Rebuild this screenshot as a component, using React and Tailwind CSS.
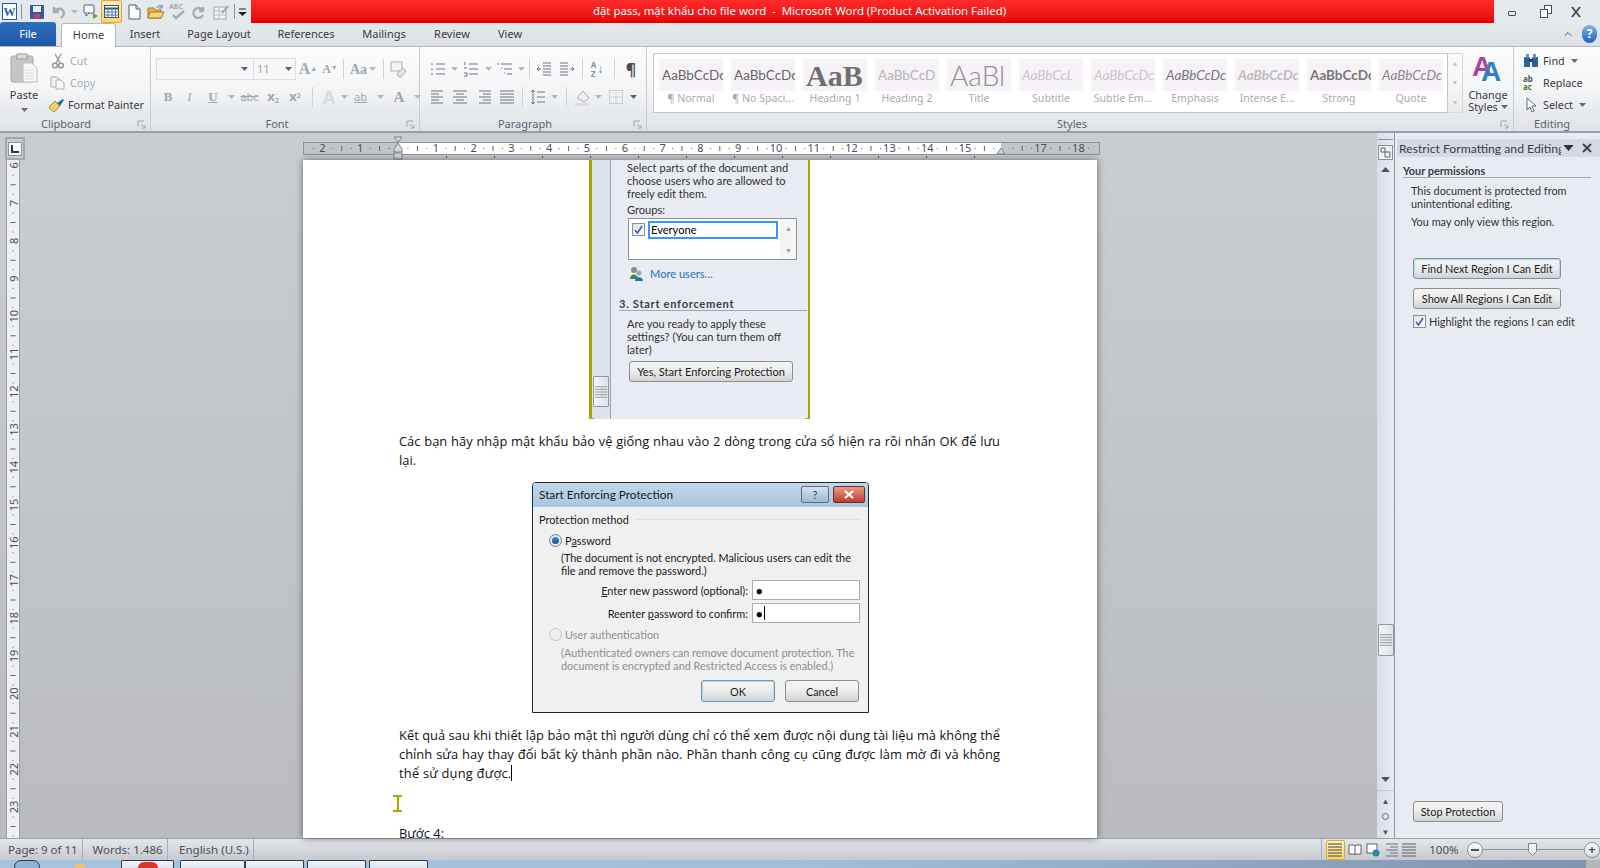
import { ChevronUp } from 'lucide-react';

const BTN = 'flex items-center justify-center whitespace-nowrap border border-[#8a8f96] rounded-[3px] bg-gradient-to-b from-[#f4f4f4] via-[#ececec] to-[#d2d2d2] text-[#1c1c1c]';

const styleItems = [
  { name: '¶ Normal', text: 'AaBbCcDc', cls: "text-[13.5px] text-[#666]" },
  { name: '¶ No Spaci...', text: 'AaBbCcDc', cls: "text-[13.5px] text-[#666]" },
  { name: 'Heading 1', text: 'AaB', cls: "text-[30px] font-bold text-[#6f6f6f] font-['Liberation_Serif',serif]" },
  { name: 'Heading 2', text: 'AaBbCcD', cls: "text-[13.5px] text-[#b5b5b5]" },
  { name: 'Title', text: 'AaBl', cls: "text-[28px] font-light text-[#8f8f8f]" },
  { name: 'Subtitle', text: 'AaBbCcL', cls: "text-[13.5px] italic text-[#c6c6c6]" },
  { name: 'Subtle Em...', text: 'AaBbCcDc', cls: "text-[13.5px] italic text-[#c6c6c6]" },
  { name: 'Emphasis', text: 'AaBbCcDc', cls: "text-[13.5px] italic text-[#777]" },
  { name: 'Intense E...', text: 'AaBbCcDc', cls: "text-[13.5px] italic font-bold text-[#bcbcbc]" },
  { name: 'Strong', text: 'AaBbCcDc', cls: "text-[13.5px] font-bold text-[#777]" },
  { name: 'Quote', text: 'AaBbCcDc', cls: "text-[13.5px] italic text-[#888]" },
];

const tabs = [
  { name: 'Insert', w: 'w-[58px]' },
  { name: 'Page Layout', w: 'w-[90px]' },
  { name: 'References', w: 'w-[84px]' },
  { name: 'Mailings', w: 'w-[72px]' },
  { name: 'Review', w: 'w-[64px]' },
  { name: 'View', w: 'w-[52px]' },
];

function Caret({ color = '#b4b8bd', className = '' }) {
  return (
    <svg width="7" height="4" viewBox="0 0 7 4" className={className}>
      <path d="M0 0h7L3.5 4z" fill={color} />
    </svg>
  );
}

function Lines({ kind = 'left', color = '#6f737a' }) {
  const rows = {
    left: 'M1 2h12M1 5h8M1 8h12M1 11h8M1 14h12',
    center: 'M1 2h14M4 5h8M1 8h14M4 11h8M1 14h14',
    right: 'M3 2h12M7 5h8M3 8h12M7 11h8M3 14h12',
    full: 'M1 2h14M1 5h14M1 8h14M1 11h14M1 14h14',
    bullets: 'M6 3h9M6 8h9M6 13h9M1 3h2M1 8h2M1 13h2',
    numbers: 'M6 3h9M6 8h9M6 13h9M2 1v3M1 7h3M1 12h3v3H1',
    multi: 'M4 3h11M7 8h8M10 13h5M1 2v2M4 7h1M7 12h1',
    dec: 'M7 2h8M7 5h8M7 8h8M7 11h8M7 14h8M5 8H1M3 6L1 8l2 2',
    inc: 'M1 2h8M1 5h8M1 8h8M1 11h8M1 14h8M11 8h4M13 6l2 2-2 2',
    spacing: 'M7 3h8M7 8h8M7 13h8M3 1v14M1 3l2-2 2 2M1 13l2 2 2-2',
  };
  return (
    <svg width="16" height="16" viewBox="0 0 16 16">
      <path d={rows[kind]} fill="none" stroke={color} strokeWidth="1" />
    </svg>
  );
}

function Launcher() {
  return (
    <svg width="9" height="9" viewBox="0 0 9 9">
      <path d="M1 7V1h6M4 4l4 4M8 5v3H5" fill="none" stroke="#a2a7ae" strokeWidth="1" />
    </svg>
  );
}

function Sep({ className = 'h-[20px]' }) {
  return <div className={`w-px bg-[#cfd3d8] ${className}`} />;
}

// fixed-width cell so the icons land where they do in the ribbon
function Cell({ w, children }) {
  return <div className={`flex items-center justify-center shrink-0 h-[22px] ${w}`}>{children}</div>;
}

function GroupLabel({ children, pad = 'pr-[16px]', launcher = true }) {
  return (
    <div className={`relative h-[14px] shrink-0 flex items-center justify-center pt-[1px] text-[11px] text-[#5b6470] ${pad}`}>
      {children}
      {launcher && <span className="absolute right-[4px] top-[3px] flex"><Launcher /></span>}
    </div>
  );
}

function TitleBar() {
  return (
    <div className="h-[23px] flex shrink-0 bg-[#e6e9ec]">
      <div className="w-[251px] flex items-center pl-[2px]">
        <div className="w-[15px] h-[17px] bg-white border border-[#1f5fa8] flex items-center justify-center text-[12px] leading-none font-bold text-[#1f5fa8] font-['Liberation_Serif',serif]">W</div>
        <div className="w-px h-[15px] bg-[#8a8f96] ml-[4px]" />
        <svg width="16" height="16" viewBox="0 0 16 16" className="ml-[7px]">
          <rect x="1" y="1" width="14" height="14" rx="1" fill="#3d55a0" />
          <rect x="4" y="2" width="8" height="6" fill="#e8edf5" />
          <rect x="5" y="10" width="6" height="5" fill="#b9426b" />
        </svg>
        <svg width="16" height="16" viewBox="0 0 16 16" className="ml-[6px]">
          <path d="M3 3v5h5M3 8c2-4 9-5 10 1 0 3-2 4-3 5" fill="none" stroke="#a8adb3" strokeWidth="2.4" />
        </svg>
        <Caret className="ml-[4px]" />
        <svg width="16" height="16" viewBox="0 0 16 16" className="ml-[5px]">
          <rect x="1" y="1" width="10" height="8" rx="1" fill="#fff" stroke="#4c5a70" />
          <path d="M3 9v3l3-3" fill="#fff" stroke="#4c5a70" />
          <path d="M10 9l5 3-5 3z" fill="#59a83a" />
        </svg>
        <div className="w-[21px] h-[23px] ml-[2px] rounded-[2px] border border-[#d9a93e] bg-gradient-to-b from-[#fff0b8] to-[#fdd568] flex items-center justify-center">
          <svg width="15" height="13" viewBox="0 0 15 13">
            <rect x="0.5" y="0.5" width="14" height="12" fill="#fff" stroke="#33507f" />
            <path d="M0 3.5h15" stroke="#33507f" strokeWidth="2" />
            <path d="M0 7h15M0 10h15M4 3v10M8 3v10M11.5 3v10" stroke="#5273a8" />
          </svg>
        </div>
        <svg width="13" height="16" viewBox="0 0 13 16" className="ml-[6px]">
          <path d="M1 1h7l4 4v10H1z" fill="#fff" stroke="#4d5b70" />
          <path d="M8 1v4h4" fill="#dfe6ef" stroke="#4d5b70" />
        </svg>
        <svg width="18" height="16" viewBox="0 0 18 16" className="ml-[6px]">
          <path d="M1 4h6l1 2h6v8H1z" fill="#eab84c" stroke="#a87a20" />
          <path d="M3 8h14l-3 6H1z" fill="#f7d678" stroke="#a87a20" />
          <path d="M10 4c1-3 4-3 5-1M15 1v3h-3" fill="none" stroke="#3b78c0" />
        </svg>
        <div className="relative w-[17px] h-[16px] ml-[4px]">
          <span className="absolute left-0 -top-[1px] text-[7px] leading-[8px] font-bold text-[#a6a9ad]">ABC</span>
          <svg width="16" height="10" viewBox="0 0 16 10" className="absolute left-[1px] top-[6px]">
            <path d="M3 5l3 3 8-7" fill="none" stroke="#a7abb0" strokeWidth="2.4" />
          </svg>
        </div>
        <svg width="14" height="14" viewBox="0 0 14 14" className="ml-[6px]">
          <path d="M11 2v4H7M11 6A5 5 0 1 0 11 10" fill="none" stroke="#a8adb3" strokeWidth="2.4" />
        </svg>
        <svg width="16" height="16" viewBox="0 0 16 16" className="ml-[7px]">
          <rect x="1" y="3" width="12" height="12" fill="#f2f3f4" stroke="#a5a8ad" />
          <path d="M1 7h12M1 11h12M6 3v12" stroke="#b8bbbf" />
          <path d="M9 9l6-7" stroke="#a5a8ad" strokeWidth="2" />
        </svg>
        <div className="w-px h-[15px] bg-[#8a8f96] ml-[5px]" />
        <svg width="9" height="8" viewBox="0 0 9 8" className="ml-[3px]">
          <path d="M1 1h7" stroke="#222" /><path d="M0 4h9L4.5 8z" fill="#222" />
        </svg>
      </div>
      <div className="w-[1243px] bg-gradient-to-b from-[#ff2a2a] to-[#e60000] flex items-center justify-center text-[11.4px] text-white pb-[2px] pr-[146px]">
        đặt pass, mật khẩu cho file word&nbsp; -&nbsp; Microsoft Word (Product Activation Failed)
      </div>
      <div className="flex-1 flex items-center text-[#4a5058]">
        <div className="w-[8px] h-[5px] border border-[#4a5058] rounded-[1px] ml-[14px] mt-[3px]" />
        <svg width="12" height="13" viewBox="0 0 12 13" className="ml-[24px]">
          <rect x="4.5" y="0.5" width="7" height="8" fill="#fff" stroke="#4a5058" />
          <rect x="0.5" y="4.5" width="7" height="8" fill="#fff" stroke="#4a5058" />
        </svg>
        <svg width="12" height="12" viewBox="0 0 12 12" className="ml-[18px]">
          <path d="M2 1l8 10M10 1L2 11" stroke="#4a5058" strokeWidth="2" />
        </svg>
      </div>
    </div>
  );
}

function Tabs() {
  return (
    <div className="h-[24px] flex shrink-0 items-end bg-gradient-to-b from-[#e6e9ec] to-[#dde0e4] border-b border-[#b5b9be] text-[11px] text-[#3b3b3b]">
      <div className="w-[56px] h-[24px] rounded-t-[3px] bg-gradient-to-b from-[#2f6fc0] to-[#1b57a5] text-white flex items-center justify-center">File</div>
      <div className="w-[55px] h-[24px] ml-[5px] -mb-px rounded-t-[3px] border border-b-0 border-[#b5b9be] bg-white flex items-center justify-center">Home</div>
      {tabs.map((t) => (
        <div key={t.name} className={`${t.w} h-[24px] flex items-center justify-center`}>{t.name}</div>
      ))}
      <div className="ml-auto h-[24px] flex items-center">
        <ChevronUp size={12} color="#555" className="mr-[8px]" />
        <div className="w-[15px] h-[18px] mr-[3px] rounded-full bg-gradient-to-b from-[#7fb2ea] to-[#1f63b8] text-white text-[12px] font-bold flex items-center justify-center">?</div>
      </div>
    </div>
  );
}

function Clipboard() {
  return (
    <div className="w-[151px] shrink-0 flex flex-col border-r border-[#c9cdd2]">
      <div className="h-[70px] shrink-0 flex">
        <div className="w-[48px] flex flex-col items-center pt-[6px]">
          <svg width="28" height="30" viewBox="0 0 28 30">
            <rect x="1" y="3" width="22" height="26" rx="2" fill="#c9c5c4" stroke="#aaa7a6" />
            <rect x="7" y="1" width="10" height="5" fill="#dedcdb" stroke="#9f9c9b" />
            <path d="M13 10h9l5 5v14H13z" fill="#f7f7f7" stroke="#b9bcc1" />
            <path d="M15 17h9M15 20h9M15 23h9M15 26h9" stroke="#d5d7da" />
          </svg>
          <div className="text-[11px] leading-[14px] mt-[5px] text-[#3b3b3b]">Paste</div>
          <Caret color="#6a6a6a" className="mt-[6px]" />
        </div>
        <div className="flex-1 text-[10.8px] flex flex-col pt-[3px] leading-[22px]">
          <div className="flex items-center h-[22px] text-[#a9adb3]">
            <svg width="14" height="16" viewBox="0 0 14 16" className="ml-[3px] mr-[5px]">
              <path d="M4 1l5 9M10 1L5 10" stroke="#9a9da2" strokeWidth="1.5" />
              <circle cx="4" cy="12.5" r="2.4" fill="none" stroke="#8f9297" strokeWidth="1.4" />
              <circle cx="10" cy="12.5" r="2.4" fill="none" stroke="#8f9297" strokeWidth="1.4" />
            </svg>
            Cut
          </div>
          <div className="flex items-center h-[22px] text-[#a9adb3]">
            <svg width="15" height="14" viewBox="0 0 15 14" className="ml-[2px] mr-[5px]">
              <path d="M1 1h6l2 2v8H1z" fill="#f2f2f2" stroke="#a9acb0" />
              <path d="M6 4h5l3 3v6H6z" fill="#fbfbfb" stroke="#a9acb0" />
            </svg>
            Copy
          </div>
          <div className="flex items-center h-[22px] text-[#3b3b3b] whitespace-nowrap">
            <svg width="17" height="15" viewBox="0 0 17 15" className="mr-[3px]">
              <path d="M1 9l6-6 5 5-6 6C4 12 2 12 1 9z" fill="#f0cf68" stroke="#b08a2a" />
              <path d="M9 5l6-4 1 1-4 6z" fill="#2f63a8" />
            </svg>
            Format Painter
          </div>
        </div>
      </div>
      <GroupLabel pad="pr-[18px]">Clipboard</GroupLabel>
    </div>
  );
}

function Font() {
  const g = 'text-[#a3a7ad]';
  return (
    <div className="w-[269px] shrink-0 flex flex-col border-r border-[#c9cdd2]">
      <div className="h-[70px] shrink-0 pt-[11px]">
        <div className="flex items-center h-[22px] pl-[5px]">
          <div className="w-[98px] h-[22px] border border-[#dadde1] bg-[#f6f7f8] flex items-center justify-end pr-[5px]"><Caret color="#5c6067" /></div>
          <div className="w-[42px] h-[22px] border border-l-0 border-[#dadde1] bg-[#f6f7f8] flex items-center justify-between px-[3px] text-[11px] text-[#a0a4aa]">11<Caret color="#5c6067" /></div>
          <div className={`w-[24px] text-center text-[16px] font-bold font-['Liberation_Serif',serif] ${g}`}>A<sup className="text-[7px]">▲</sup></div>
          <div className={`w-[20px] text-center text-[12px] font-bold font-['Liberation_Serif',serif] ${g}`}>A<sup className="text-[7px]">▼</sup></div>
          <Cell w="w-[6px]"><Sep /></Cell>
          <div className={`w-[34px] flex items-center justify-center gap-[2px] text-[14px] font-bold font-['Liberation_Serif',serif] ${g}`}>Aa<Caret /></div>
          <Cell w="w-[6px]"><Sep /></Cell>
          <Cell w="w-[24px]">
            <svg width="17" height="17" viewBox="0 0 17 17">
              <rect x="1" y="1" width="11" height="9" fill="#f4f4f4" stroke="#a9acb0" />
              <path d="M7 13l6-6 3 3-5 6H9z" fill="#e3e4e6" stroke="#a9acb0" />
            </svg>
          </Cell>
        </div>
        <div className={`flex items-center h-[22px] mt-[6px] pl-[7px] ${g}`}>
          <Cell w="w-[20px]"><span className="text-[13px] font-bold font-['Liberation_Serif',serif]">B</span></Cell>
          <Cell w="w-[23px]"><span className="text-[13px] italic font-['Liberation_Serif',serif]">I</span></Cell>
          <Cell w="w-[24px]"><span className="text-[13px] font-bold underline font-['Liberation_Serif',serif]">U</span></Cell>
          <Cell w="w-[12px]"><Caret /></Cell>
          <Cell w="w-[25px]"><span className="text-[11px] line-through">abc</span></Cell>
          <Cell w="w-[22px]"><span className="text-[13px] font-bold">x<sub className="text-[7px]">2</sub></span></Cell>
          <Cell w="w-[22px]"><span className="text-[13px] font-bold">x<sup className="text-[7px]">2</sup></span></Cell>
          <Cell w="w-[12px]"><Sep /></Cell>
          <Cell w="w-[22px]"><span className="text-[18px] font-bold text-[#d8dadd]">A</span></Cell>
          <Cell w="w-[8px]"><Caret /></Cell>
          <Cell w="w-[25px]"><span className="text-[11px] underline">ab</span></Cell>
          <Cell w="w-[14px]"><Caret /></Cell>
          <Cell w="w-[24px]"><span className="text-[15px] font-bold font-['Liberation_Serif',serif]">A</span></Cell>
          <Cell w="w-[12px]"><Caret /></Cell>
        </div>
      </div>
      <GroupLabel>Font</GroupLabel>
    </div>
  );
}

function Paragraph() {
  return (
    <div className="w-[227px] shrink-0 flex flex-col border-r border-[#c9cdd2]">
      <div className="h-[70px] shrink-0 pt-[11px]">
        <div className="flex items-center h-[22px] pl-[8px]">
          <Cell w="w-[20px]"><Lines kind="bullets" /></Cell>
          <Cell w="w-[12px]"><Caret /></Cell>
          <Cell w="w-[22px]"><Lines kind="numbers" /></Cell>
          <Cell w="w-[12px]"><Caret /></Cell>
          <Cell w="w-[22px]"><Lines kind="multi" /></Cell>
          <Cell w="w-[10px]"><Caret /></Cell>
          <Cell w="w-[6px]"><Sep /></Cell>
          <Cell w="w-[24px]"><Lines kind="dec" /></Cell>
          <Cell w="w-[22px]"><Lines kind="inc" /></Cell>
          <Cell w="w-[8px]"><Sep /></Cell>
          <Cell w="w-[22px]">
            <span className="text-[8px] leading-[9px] font-bold text-[#8e9298]">A<br />Z</span>
            <span className="text-[12px] text-[#6f737a] ml-[1px]">↓</span>
          </Cell>
          <Cell w="w-[12px]"><Sep /></Cell>
          <Cell w="w-[22px]"><span className="text-[16px] font-bold text-[#4a4d52]">¶</span></Cell>
        </div>
        <div className="flex items-center h-[22px] mt-[6px] pl-[8px]">
          <Cell w="w-[20px]"><Lines kind="left" /></Cell>
          <Cell w="w-[24px]"><Lines kind="center" /></Cell>
          <Cell w="w-[24px]"><Lines kind="right" /></Cell>
          <Cell w="w-[22px]"><Lines kind="full" /></Cell>
          <Cell w="w-[8px]"><Sep /></Cell>
          <Cell w="w-[24px]"><Lines kind="spacing" /></Cell>
          <Cell w="w-[9px]"><Caret /></Cell>
          <Cell w="w-[14px]"><Sep /></Cell>
          <Cell w="w-[20px]">
            <svg width="18" height="17" viewBox="0 0 18 17">
              <path d="M3 9l6-7 6 7-5 4z" fill="#efefef" stroke="#a9acb0" />
              <rect x="1" y="14" width="14" height="3" fill="#d9dbde" />
            </svg>
          </Cell>
          <Cell w="w-[11px]"><Caret /></Cell>
          <Cell w="w-[24px]">
            <svg width="14" height="14" viewBox="0 0 14 14">
              <rect x="0.5" y="0.5" width="13" height="13" fill="none" stroke="#a6aab0" strokeDasharray="1 1" />
              <path d="M7 0v14M0 7h14" stroke="#b8bbbf" strokeDasharray="1 1" />
            </svg>
          </Cell>
          <Cell w="w-[10px]"><Caret color="#5c6067" /></Cell>
        </div>
      </div>
      <GroupLabel>Paragraph</GroupLabel>
    </div>
  );
}

function Styles() {
  return (
    <div className="w-[867px] shrink-0 flex flex-col border-r border-[#c9cdd2]">
      <div className="h-[70px] shrink-0 flex pt-[6px] pl-[6px]">
        <div className="w-[795px] h-[60px] bg-white border border-[#c4c8cd] flex pt-[5px] pl-[5px] gap-[8px]">
          {styleItems.map((s) => (
            <div key={s.name} className="w-[64px] shrink-0">
              <div className={`h-[32px] bg-[#f6f2f7] overflow-hidden whitespace-nowrap flex items-center pl-[3px] font-['Lato',sans-serif] ${s.cls}`}>{s.text}</div>
              <div className="text-[10.6px] leading-[14px] mt-[0px] text-center text-[#a6aab0] whitespace-nowrap">{s.name}</div>
            </div>
          ))}
        </div>
        <div className="w-[15px] h-[60px] border border-l-0 border-[#d4d7db] flex flex-col items-center justify-around">
          <span className="text-[7px] leading-none text-[#c2c5c9]">▲</span>
          <span className="text-[7px] leading-none text-[#c2c5c9]">▼</span>
          <span className="text-[7px] leading-none text-[#c2c5c9]">▼</span>
        </div>
        <div className="flex-1 flex flex-col items-center text-[10.8px] leading-[12px] text-[#3b3b3b]">
          <div className="relative h-[36px] w-[32px] font-['Liberation_Sans',sans-serif] font-bold">
            <span className="absolute left-0 top-0 text-[28px] leading-[28px] text-[#b03f9d]">A</span>
            <span className="absolute left-[9px] top-[5px] text-[28px] leading-[28px] text-[#2f7fc4]">A</span>
          </div>
          <div>Change</div>
          <div className="flex items-center gap-[3px]">Styles<Caret color="#6a6a6a" /></div>
        </div>
      </div>
      <GroupLabel>Styles</GroupLabel>
    </div>
  );
}

function Editing() {
  return (
    <div className="flex-1 flex flex-col">
      <div className="h-[70px] shrink-0 text-[10.8px] text-[#3b3b3b] pt-[3px] pl-[9px]">
        <div className="flex items-center h-[22px] gap-[4px]">
          <svg width="16" height="14" viewBox="0 0 16 14">
            <rect x="1" y="3" width="6" height="10" rx="1" fill="#2d5f9e" />
            <rect x="9" y="3" width="6" height="10" rx="1" fill="#2d5f9e" />
            <rect x="3" y="0" width="3" height="4" fill="#6f90bd" />
            <rect x="10" y="0" width="3" height="4" fill="#6f90bd" />
            <rect x="6" y="5" width="4" height="3" fill="#1f3f6f" />
          </svg>
          Find<Caret color="#6a6a6a" className="ml-[2px]" />
        </div>
        <div className="flex items-center h-[22px] gap-[4px]">
          <span className="w-[16px] text-[8px] leading-[8px] font-bold text-[#555]">ab<br /><span className="text-[#3d7f2f]">ac</span></span>
          Replace
        </div>
        <div className="flex items-center h-[22px] gap-[4px]">
          <svg width="16" height="16" viewBox="0 0 16 16">
            <path d="M4 1v12l3-3 2 5 2-1-2-5h4z" fill="#fff" stroke="#5c6a80" />
          </svg>
          Select<Caret color="#6a6a6a" className="ml-[2px]" />
        </div>
      </div>
      <GroupLabel pad="pr-[10px]" launcher={false}>Editing</GroupLabel>
    </div>
  );
}

function HRuler() {
  const nums = [-2, -1, 1, 2, 3, 4, 5, 6, 7, 8, 9, 10, 11, 12, 13, 14, 15, 17, 18];
  const x = (n) => 95 + n * 37.8;
  const dots = [];
  for (let i = -2.5; i < 18.5; i += 0.25) {
    if (Number.isInteger(i) || i === 16 || x(i) < 2 || x(i) > 794) continue;
    dots.push(i);
  }
  const stops = Array.from({ length: 12 }, (_, i) => 95 + (i + 1) * 48);
  return (
    <svg width="802" height="27" viewBox="0 0 802 27" className="ml-[278px] shrink-0">
      <rect x="0.5" y="9.5" width="796" height="12" fill="#c2c6cb" stroke="#8e9298" />
      <rect x="95" y="10" width="603" height="11" fill="#fff" />
      {dots.map((d) => (
        <rect key={d} x={x(d)} y={Number.isInteger(d * 2) ? 13 : 15} width="1" height={Number.isInteger(d * 2) ? 5 : 1} fill="#5c6067" />
      ))}
      {nums.map((n) => (
        <text key={n} x={x(n)} y="19" fontSize="11" textAnchor="middle" fill="#4c5056" fontFamily="Noto Sans">{Math.abs(n)}</text>
      ))}
      {stops.map((s) => <rect key={s} x={s} y="23" width="1" height="2" fill="#4c5056" />)}
      <path d="M91 4h8l-4 5zM91 16l4-6 4 6v3h-8z" fill="#d5d8dc" stroke="#7f8389" />
      <rect x="91" y="20" width="8" height="6" fill="#d5d8dc" stroke="#7f8389" />
      <path d="M694 21l4-6 4 6z" fill="#d5d8dc" stroke="#7f8389" />
    </svg>
  );
}

function VRuler() {
  const nums = Array.from({ length: 18 }, (_, i) => i + 6);
  const y = (n) => 43 + (n - 7) * 37.75;
  return (
    <svg width="14" height="678" viewBox="0 0 14 678" className="ml-[6px] shrink-0">
      <rect x="0.5" y="-1" width="13" height="680" fill="#eef0f2" stroke="#9a9ea4" />
      {nums.map((n) => (
        <g key={n}>
          <text x="7" y={y(n)} fontSize="11" textAnchor="middle" dominantBaseline="central" fill="#4c5056" fontFamily="Noto Sans" transform={`rotate(-90 7 ${y(n)})`}>{n}</text>
          <rect x="4.5" y={y(n) + 19} width="5" height="1" fill="#5c6067" />
          <rect x="6.5" y={y(n) + 9.5} width="1" height="1" fill="#5c6067" />
          <rect x="6.5" y={y(n) + 28.5} width="1" height="1" fill="#5c6067" />
        </g>
      ))}
    </svg>
  );
}

function Check({ className = '' }) {
  return (
    <div className={`w-[13px] h-[13px] border border-[#8e9298] bg-gradient-to-br from-[#dfe3e8] to-white flex items-center justify-center shrink-0 ${className}`}>
      <svg width="9" height="9" viewBox="0 0 9 9"><path d="M1 5l2.5 3L8 1" fill="none" stroke="#3d5fa8" strokeWidth="1.6" /></svg>
    </div>
  );
}

function EmbeddedPane() {
  return (
    <div className="relative w-[221px] h-[259px] ml-[286px] flex bg-[#e8ebf1] border-l-[3px] border-r-[2px] border-[#a9a400] font-['Lato',sans-serif] text-[11.1px] leading-[13px] text-[#333]">
      <div className="w-[19px] border-r border-[#9aa2ad] bg-[#dde3ec] flex flex-col justify-end pb-[12px] items-center shrink-0">
        <div className="w-[16px] h-[31px] bg-gradient-to-r from-[#f2f4f7] to-[#dfe3e9] border border-[#8e98a5] rounded-[1px] flex items-center justify-center">
          <Lines kind="full" color="#8a8f96" />
        </div>
      </div>
      <div className="flex-1 pl-[8px] pt-[1px] relative">
        <div className="pl-[8px] whitespace-nowrap">
          Select parts of the document and<br />choose users who are allowed to<br />freely edit them.
        </div>
        <div className="pl-[8px] mt-[3px]">Groups:</div>
        <div className="ml-[9px] w-[169px] h-[42px] mt-[2px] bg-white border border-[#8e9298] flex pt-[2px] pl-[3px]">
          <Check className="mt-[2px] mr-[3px]" />
          <div className="w-[130px] h-[18px] border-2 border-[#3399ff] text-[11.1px] leading-[13px] text-black pl-[1px]">Everyone</div>
          <div className="flex-1 flex flex-col items-center text-[7px] text-[#9a9ea4] pl-[1px] gap-[9px] pt-[3px] bg-[#f5f5f5] ml-[2px] -mt-[2px]">
            <span>▲</span><span>▼</span>
          </div>
        </div>
        <div className="flex items-center ml-[10px] mt-[6px] gap-[7px] text-[#1f6fc4]">
          <svg width="14" height="15" viewBox="0 0 14 15">
            <circle cx="5" cy="4" r="3" fill="#8d8d8d" />
            <path d="M1 13c0-6 8-6 8 0z" fill="#3f8a48" />
            <circle cx="10" cy="7" r="2.5" fill="#9fa5ab" />
            <path d="M6 15c0-5 8-5 8 0z" fill="#2a6bc0" />
          </svg>
          More users…
        </div>
        <div className="mt-[16px] font-bold text-[#3a3f47] tracking-[0.7px]">3. Start enforcement</div>
        <div className="h-px bg-[#a2a7ae] w-[188px]" />
        <div className="pl-[8px] mt-[6px] whitespace-nowrap">
          Are you ready to apply these<br />settings? (You can turn them off<br />later)
        </div>
        <div className={`${BTN} ml-[10px] mt-[5px] w-[164px] h-[21px]`}>Yes, Start Enforcing Protection</div>
      </div>
      <span className="absolute -left-[3px] bottom-0 w-[5px] h-[1px] bg-[#a9a400]" />
      <span className="absolute -right-[2px] bottom-0 w-[5px] h-[1px] bg-[#a9a400]" />
    </div>
  );
}

function Radio({ on }) {
  return (
    <div className={`w-[13px] h-[13px] rounded-full border flex items-center justify-center shrink-0 ${on ? 'border-[#6f7f92] bg-[#e4e8ec]' : 'border-[#c3c6ca] bg-[#ececec]'}`}>
      {on && <div className="w-[7px] h-[7px] rounded-full bg-gradient-to-b from-[#4a8fd4] to-[#114f96]" />}
    </div>
  );
}

function Dialog() {
  return (
    <div className="w-[337px] h-[231px] ml-[229px] mt-[12px] border border-[#20272e] rounded-t-[4px] bg-[#f0f0f0] font-['Lato',sans-serif] text-[10.9px] leading-[13px] text-[#1a1a1a] overflow-hidden">
      <div className="h-[24px] bg-gradient-to-b from-[#c0d6ea] to-[#a9c6df] flex items-center pl-[6px] text-[11.8px] pb-[1px]">
        Start Enforcing Protection
        <div className="ml-auto w-[28px] h-[17px] border border-[#5a6e82] rounded-[2px] bg-gradient-to-b from-[#d5e3ef] to-[#9db9d2] flex items-center justify-center text-[11px] text-[#30404f]">?</div>
        <div className="ml-[4px] mr-[3px] w-[32px] h-[17px] border border-[#6e2f2a] rounded-[2px] bg-gradient-to-b from-[#e59a8a] to-[#c0392b] flex items-center justify-center">
          <svg width="12" height="9" viewBox="0 0 12 9"><path d="M2 1l8 7M10 1L2 8" stroke="#fff" strokeWidth="2.2" /></svg>
        </div>
      </div>
      <div className="pt-[6px] pl-[6px] pr-[8px]">
        <div className="flex items-center">
          Protection method
          <div className="flex-1 h-px bg-[#dcdfe3] ml-[6px]" />
        </div>
        <div className="flex items-center pl-[10px] mt-[7px] gap-[3px] h-[14px]">
          <Radio on /><span>P<span className="underline">a</span>ssword</span>
        </div>
        <div className="pl-[22px] mt-[4px] whitespace-nowrap">
          (The document is not encrypted. Malicious users can edit the<br />file and remove the password.)
        </div>
        <div className="flex items-center justify-end mt-[3px] h-[20px]">
          <span className="mr-[4px]"><span className="underline">E</span>nter new password (optional):</span>
          <div className="w-[108px] h-[20px] bg-white border border-[#abadb3] flex items-center pl-[3px] text-black">●</div>
        </div>
        <div className="flex items-center justify-end mt-[3px] h-[20px]">
          <span className="mr-[4px]">Reenter <span className="underline">p</span>assword to confirm:</span>
          <div className="w-[108px] h-[20px] bg-white border border-[#abadb3] flex items-center pl-[3px] text-black">●<span className="w-px h-[14px] bg-black ml-[1px]" /></div>
        </div>
        <div className="flex items-center pl-[10px] mt-[4px] gap-[3px] h-[14px] text-[#8b8f94]">
          <Radio /><span>User authentication</span>
        </div>
        <div className="pl-[22px] mt-[5px] text-[#8b8f94] whitespace-nowrap">
          (Authenticated owners can remove document protection. The<br />document is encrypted and Restricted Access is enabled.)
        </div>
        <div className="flex justify-end gap-[10px] mt-[8px] mr-[1px]">
          <div className={`${BTN} w-[74px] h-[22px] border-[#3c9fe0] shadow-[inset_0_0_0_1px_#a9def7]`}>OK</div>
          <div className={`${BTN} w-[74px] h-[22px]`}>Cancel</div>
        </div>
      </div>
    </div>
  );
}

// lines of the body text are justified to the page's text width in Word
function Justified({ children }) {
  return <span className="block w-[601px] text-justify [text-align-last:justify]">{children}</span>;
}

function Page() {
  return (
    <div className="w-[794px] ml-[283px] h-full bg-white shrink-0 overflow-hidden relative shadow-[0_0_7px_rgba(60,60,60,0.7)] font-['Open_Sans',sans-serif] text-[12.9px] leading-[19px] text-[#111]">
      <EmbeddedPane />
      <p className="pl-[96px] mt-[13px]">
        <Justified>Các bạn hãy nhập mật khẩu bảo vệ giống nhau vào 2 dòng trong cửa sổ hiện ra rồi nhấn OK để lưu</Justified>
        lại.
      </p>
      <Dialog />
      <p className="pl-[96px] mt-[13px]">
        <Justified>Kết quả sau khi thiết lập bảo mật thì người dùng chỉ có thể xem được nội dung tài liệu mà không thể</Justified>
        <Justified>chỉnh sửa hay thay đổi bất kỳ thành phần nào. Phần thanh công cụ cũng được làm mờ đi và không</Justified>
        <span className="tracking-[0.2px]">thể sử dụng được.</span><span className="inline-block w-px h-[16px] bg-black align-[-3px]" />
      </p>
      <p className="pl-[96px] mt-[41px]">Bước 4:</p>
      <span className="absolute left-[90px] top-[635px] w-[9px] h-[17px] border-y-2 border-[#a9a400] flex justify-center">
        <span className="w-[2px] h-full bg-[#a9a400]" />
      </span>
    </div>
  );
}

function ScrollColumn() {
  return (
    <div className="w-[18px] shrink-0 flex flex-col items-center bg-gradient-to-r from-[#d9dee6] to-[#e6ebf2] border-r border-[#8e98a5] text-[#555]">
      <div className="w-[15px] h-px bg-[#8e9298] mt-[6px]" />
      <div className="w-[15px] h-[15px] mt-[5px] border border-[#8e9298] bg-[#eef0f3] flex items-center justify-center">
        <svg width="11" height="11" viewBox="0 0 11 11"><path d="M1 1h4v4H1zM5 5h5v5H5z" fill="none" stroke="#666" /></svg>
      </div>
      <svg width="9" height="5" viewBox="0 0 9 5" className="mt-[7px]"><path d="M0 5h9L4.5 0z" fill="#555" /></svg>
      <div className="w-[16px] h-[32px] mt-[452px] border border-[#8e98a5] rounded-[1px] bg-gradient-to-r from-[#f2f4f7] to-[#dfe3e9] flex items-center justify-center">
        <Lines kind="full" color="#8a8f96" />
      </div>
      <svg width="9" height="5" viewBox="0 0 9 5" className="mt-[121px]"><path d="M0 0h9L4.5 5z" fill="#555" /></svg>
      <div className="w-full h-px bg-[#c4c9d0] mt-[8px]" />
      <div className="text-[8px] leading-[8px] mt-[6px]">▲</div>
      <div className="w-[7px] h-[7px] rounded-full border border-[#666] mt-[8px]" />
      <div className="text-[8px] leading-[8px] mt-[8px]">▼</div>
    </div>
  );
}

function Panel() {
  return (
    <div className="flex-1 bg-[#e8ebf1] font-['Lato',sans-serif] text-[10.9px] leading-[13px] text-[#333] flex flex-col pl-[2px]">
      <div className="h-[18px] mt-[6px] bg-[#d5dae2] flex items-center pl-[2px] text-[12.2px] text-[#3a3f47]">
        <span className="w-[162px] overflow-hidden whitespace-nowrap">Restrict Formatting and Editing</span>
        <Caret color="#333" className="ml-[4px] scale-150" />
        <svg width="10" height="10" viewBox="0 0 10 10" className="ml-[10px]"><path d="M1 1l8 8M9 1L1 9" stroke="#444" strokeWidth="2" /></svg>
      </div>
      <div className="ml-[6px] mt-[7px] w-[188px] font-bold text-[#3a3f47] border-b border-[#a2a7ae]">Your permissions</div>
      <div className="ml-[14px] mt-[6px] whitespace-nowrap">This document is protected from<br />unintentional editing.</div>
      <div className="ml-[14px] mt-[5px] whitespace-nowrap">You may only view this region.</div>
      <div className={`${BTN} ml-[16px] mt-[30px] w-[148px] h-[21px] border-[#3c9fe0] shadow-[inset_0_0_0_1px_#a9def7]`}>Find Next Region I Can Edit</div>
      <div className={`${BTN} ml-[16px] mt-[9px] w-[148px] h-[21px]`}>Show All Regions I Can Edit</div>
      <div className="ml-[16px] mt-[6px] flex items-center gap-[3px] whitespace-nowrap">
        <Check />Highlight the regions I can edit
      </div>
      <div className={`${BTN} ml-[16px] mt-[473px] w-[90px] h-[21px]`}>Stop Protection</div>
    </div>
  );
}

function StatusBar() {
  return (
    <div className="h-[22px] shrink-0 flex items-center bg-gradient-to-b from-[#e4e7ea] to-[#c6cacf] border-t border-[#9da1a6] text-[11.5px] text-[#4a5058]">
      <div className="w-[83px] h-full pl-[8px] flex items-center border-r border-[#a9adb2]">Page: 9 of 11</div>
      <div className="w-[86px] h-full pl-[10px] flex items-center border-r border-[#a9adb2]">Words: 1.486</div>
      <div className="w-[86px] h-full pl-[11px] flex items-center border-r border-[#a9adb2]">English (U.S.)</div>
      <div className="ml-[1067px] w-px h-full bg-[#a9adb2]" />
      <div className="ml-[4px] w-[19px] h-[20px] rounded-[2px] border border-[#d9a93e] bg-gradient-to-b from-[#fff0b8] to-[#fdd568] flex items-center justify-center"><Lines kind="full" color="#3f4650" /></div>
      <div className="ml-[2px] w-[18px] flex justify-center">
        <svg width="14" height="14" viewBox="0 0 14 14"><path d="M1 2h5l1 1 1-1h5v9H8l-1 1-1-1H1zM7 3v9" fill="#fff" stroke="#5c6067" /></svg>
      </div>
      <div className="w-[18px] flex justify-center">
        <svg width="14" height="14" viewBox="0 0 14 14"><rect x="1" y="1" width="10" height="9" fill="#fff" stroke="#5c6067" /><circle cx="10" cy="10" r="3.5" fill="#2d7fc4" /><path d="M8 11l2-2 2 2" fill="#4aa03f" /></svg>
      </div>
      <div className="w-[18px] flex justify-center"><Lines kind="right" /></div>
      <div className="w-[18px] flex justify-center"><Lines kind="full" color="#5c6067" /></div>
      <div className="ml-[6px] w-[40px] text-center">100%</div>
      <div className="ml-[3px] w-[16px] h-[16px] rounded-full border border-[#8e9298] bg-gradient-to-b from-white to-[#d8dbdf] flex items-center justify-center">
        <div className="w-[8px] h-[2px] bg-[#555]" />
      </div>
      <div className="w-[102px] h-px bg-[#8e9298] relative">
        <svg width="9" height="13" viewBox="0 0 9 13" className="absolute left-[45px] -top-[6px]">
          <path d="M0.5 0.5h8v8l-4 4-4-4z" fill="#f2f3f5" stroke="#7f8389" />
        </svg>
      </div>
      <div className="w-[16px] h-[16px] rounded-full border border-[#8e9298] bg-gradient-to-b from-white to-[#d8dbdf] flex items-center justify-center text-[13px] leading-none font-bold text-[#555]">+</div>
    </div>
  );
}

function TaskBar() {
  const chrome = 'h-[8px] rounded-t-[2px] border border-b-0 border-[#2b3a4d] bg-gradient-to-b from-[#f5f7fa] to-[#dbe3ec] shrink-0';
  return (
    <div className="h-[8px] shrink-0 flex items-end bg-gradient-to-r from-[#a6c3e0] via-[#a2bedb] to-[#7f93ad] overflow-hidden">
      <div className="w-[26px] h-[14px] ml-[14px] -mb-[6px] rounded-full border border-[#2b3a4d] bg-[#8fb4d8] shrink-0" />
      <div className="w-[10px] h-[4px] ml-[35px] bg-[#e9c46a] shrink-0" />
      <div className={`${chrome} w-[53px] ml-[36px]`}>
        <div className="w-[20px] h-[6px] mx-auto mt-[1px] rounded-t-full bg-[#d9342b]" />
      </div>
      <div className={`${chrome} w-[65px] ml-[6px]`} />
      <div className={`${chrome} w-[59px]`} />
      <div className={`${chrome} w-[59px] ml-[3px]`} />
      <div className={`${chrome} w-[59px] ml-[3px]`} />
      <div className="ml-auto w-[14px] h-[8px] bg-[#b3b5b8] shrink-0" />
    </div>
  );
}

export default function App() {
  return (
    <div className="w-[1600px] h-[868px] overflow-hidden flex flex-col bg-[#c9cdd2] font-['Noto_Sans',sans-serif]">
      <TitleBar />
      <Tabs />
      <div className="h-[86px] shrink-0 flex bg-gradient-to-b from-[#fbfcfc] via-[#f3f5f7] to-[#dfe2e6] border-b-2 border-[#9a9ea4]">
        <Clipboard />
        <Font />
        <Paragraph />
        <Styles />
        <Editing />
      </div>
      <div className="flex-1 flex min-h-0">
        <div className="w-[1377px] shrink-0 flex flex-col min-h-0">
          <div className="h-[27px] shrink-0 flex bg-[#c9cdd2]">
            <div className="w-[20px] h-[23px] ml-[5px] mt-[4px] shrink-0 border-2 border-[#a5a9ae] bg-[#c9cdd2] flex items-center justify-center">
              <div className="w-[14px] h-[14px] bg-white border border-[#8e9298] flex items-center justify-center">
                <svg width="8" height="8" viewBox="0 0 8 8"><path d="M1 0v7h7" fill="none" stroke="#333" strokeWidth="2" /></svg>
              </div>
            </div>
            <HRuler />
          </div>
          <div className="flex-1 min-h-0 flex bg-gradient-to-b from-[#c9cdd2] to-[#b9bbbf]">
            <VRuler />
            <Page />
          </div>
        </div>
        <ScrollColumn />
        <Panel />
      </div>
      <StatusBar />
      <TaskBar />
    </div>
  );
}
